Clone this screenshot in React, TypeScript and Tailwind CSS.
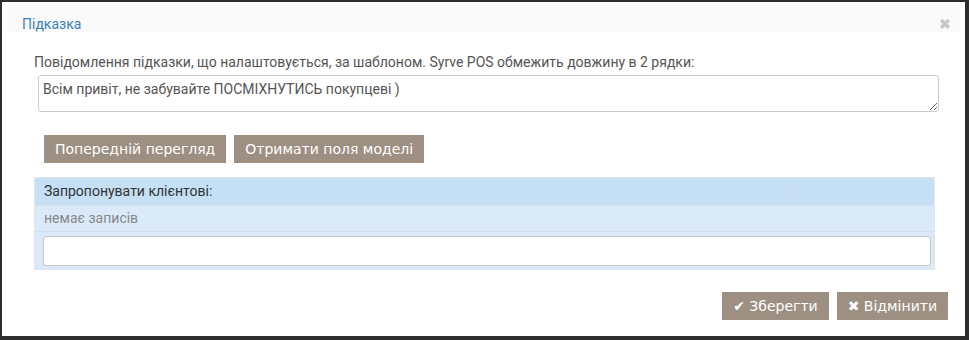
import { useState } from "react";

const btn =
  "h-[28px] bg-[#9d9082] px-[11px] text-[14px] leading-[28px] text-white [font-family:Tahoma,'DejaVu_Sans',sans-serif]";

export default function App() {
  const [text, setText] = useState("Всім привіт, не забувайте ПОСМІХНУТИСЬ покупцеві )");

  return (
    <div className="h-[340px] w-[969px] bg-[#2d2d2d] pt-[2px] pl-[2px] [font-family:Roboto,'Liberation_Sans',sans-serif]">
      <div className="flex h-[334px] w-[963px] flex-col bg-white">
        <div className="mx-[5px] mt-[5px] flex h-[25px] items-start justify-between bg-[#fafafa] pt-[9px] pl-[15px] pr-[9px]">
          <span className="text-[14px] leading-[16px] text-[#3b80b6]">Підказка</span>
          <span className="text-[14px] leading-[16px] font-bold text-[#c9c9c9]">✖</span>
        </div>

        <div className="pl-[32px] pr-[24px]">
          <p className="mt-[22px] text-[14px] leading-[16px] text-[#555]">
            Повідомлення підказки, що налаштовується, за шаблоном. Syrve POS обмежить довжину в 2 рядки:
          </p>
          <textarea
            value={text}
            onChange={(e) => setText(e.target.value)}
            className="mt-[5px] ml-[4px] block h-[37px] w-[901px] rounded-[3px] border border-[#ccc] px-[4px] py-[5px] text-[14px] leading-[16px] text-[#555] outline-none"
          />

          <div className="mt-[23px] ml-[10px] flex gap-[8px]">
            <button type="button" className={btn}>Попередній перегляд</button>
            <button type="button" className={btn}>Отримати поля моделі</button>
          </div>

          <div className="mt-[14px] w-[901px] border border-[#dde6ee]">
            <div className="flex h-[28px] border-b border-[#d6e3ef] bg-[#c5dff4] text-[14px] text-[#333]">
              <div className="flex flex-1 items-center border-r border-[#cdd9e4] pl-[9px]">Запропонувати клієнтові:</div>
              <div className="w-[139px]" />
            </div>
            <div className="flex h-[26px] items-center border-b border-[#d2e0ec] bg-[#dbeaf9] pl-[9px] text-[14px] text-[#888]">
              немає записів
            </div>
            <div className="bg-[#dbeaf9] pl-[8px] pr-[3px] pt-[4px] pb-[3px]">
              <input className="block h-[30px] w-full rounded-[3px] border border-[#c8c8c8] bg-white outline-none" />
            </div>
          </div>
        </div>

        <div className="mt-auto mb-[16px] flex justify-end gap-[8px] pr-[17px]">
          <button type="button" className={btn}>✔ Зберегти</button>
          <button type="button" className={btn}>✖ Відмінити</button>
        </div>
      </div>
    </div>
  );
}
